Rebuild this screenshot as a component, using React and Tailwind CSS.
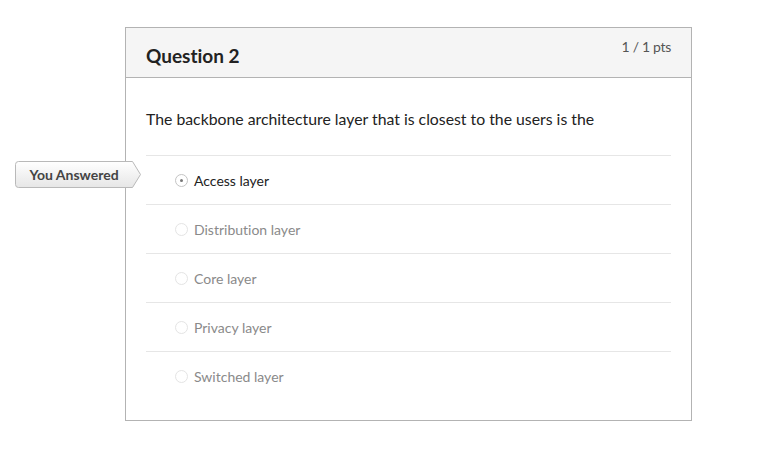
import React from 'react';

const answers = [
  { label: 'Access layer', selected: true },
  { label: 'Distribution layer' },
  { label: 'Core layer' },
  { label: 'Privacy layer' },
  { label: 'Switched layer' },
];

const YouAnswered = () => (
  <div className="absolute left-[-111px] top-[133px] w-[127px] h-[27px]">
    <svg className="absolute inset-0" width="127" height="27" viewBox="0 0 127 27">
      <defs>
        <linearGradient id="badgeGrad" x1="0" y1="0" x2="0" y2="1">
          <stop offset="0" stopColor="#ffffff" />
          <stop offset="1" stopColor="#e6e6e6" />
        </linearGradient>
      </defs>
      <path
        d="M3.5 0.5 H117.5 L125.5 13.5 L117.5 26.5 H3.5 Q0.5 26.5 0.5 23.5 V3.5 Q0.5 0.5 3.5 0.5 Z"
        fill="url(#badgeGrad)"
        stroke="#b9b9b9"
      />
    </svg>
    <div className="relative w-[118px] h-[27px] flex items-center justify-center text-[14px] font-bold text-[#444]">
      You Answered
    </div>
  </div>
);

const Radio = ({ selected }) => (
  <span
    className={`w-[13px] h-[13px] rounded-full border flex items-center justify-center ${
      selected ? 'border-[#c4c4c4]' : 'border-[#e4e4e4]'
    }`}
  >
    {selected && <span className="w-[3px] h-[3px] rounded-full bg-[#777]" />}
  </span>
);

export default function App() {
  return (
    <div className="w-[758px] h-[454px] bg-white font-['Lato','Liberation_Sans',sans-serif] [font-variant-ligatures:no-common-ligatures] pt-[27px] pl-[125px]">
      <div className="relative w-[567px] border border-[#b3b3b3]">
        <div className="h-[50px] bg-[#f5f5f5] border-b border-[#b3b3b3] flex items-start justify-between px-5">
          <h2 className="pt-[16px] text-[19px] leading-[23px] font-bold text-[#222]">Question 2</h2>
          <span className="pt-[9px] text-[14px] leading-[20px] text-[#555] tracking-[-0.3px]">1 / 1 pts</span>
        </div>
        <div className="px-5 pt-[29px] pb-[20px]">
          <p className="text-[15.8px] leading-[24px] text-[#222] mb-[24px]">
            The backbone architecture layer that is closest to the users is the
          </p>
          {answers.map((a) => (
            <div key={a.label} className="h-[49px] border-t border-[#e6e6e6] flex items-center pl-[29px] gap-[6px]">
              <Radio selected={a.selected} />
              <span className={`text-[14px] ${a.selected ? 'text-[#222]' : 'text-[#8a8a8a]'}`}>{a.label}</span>
            </div>
          ))}
        </div>
        <YouAnswered />
      </div>
    </div>
  );
}
